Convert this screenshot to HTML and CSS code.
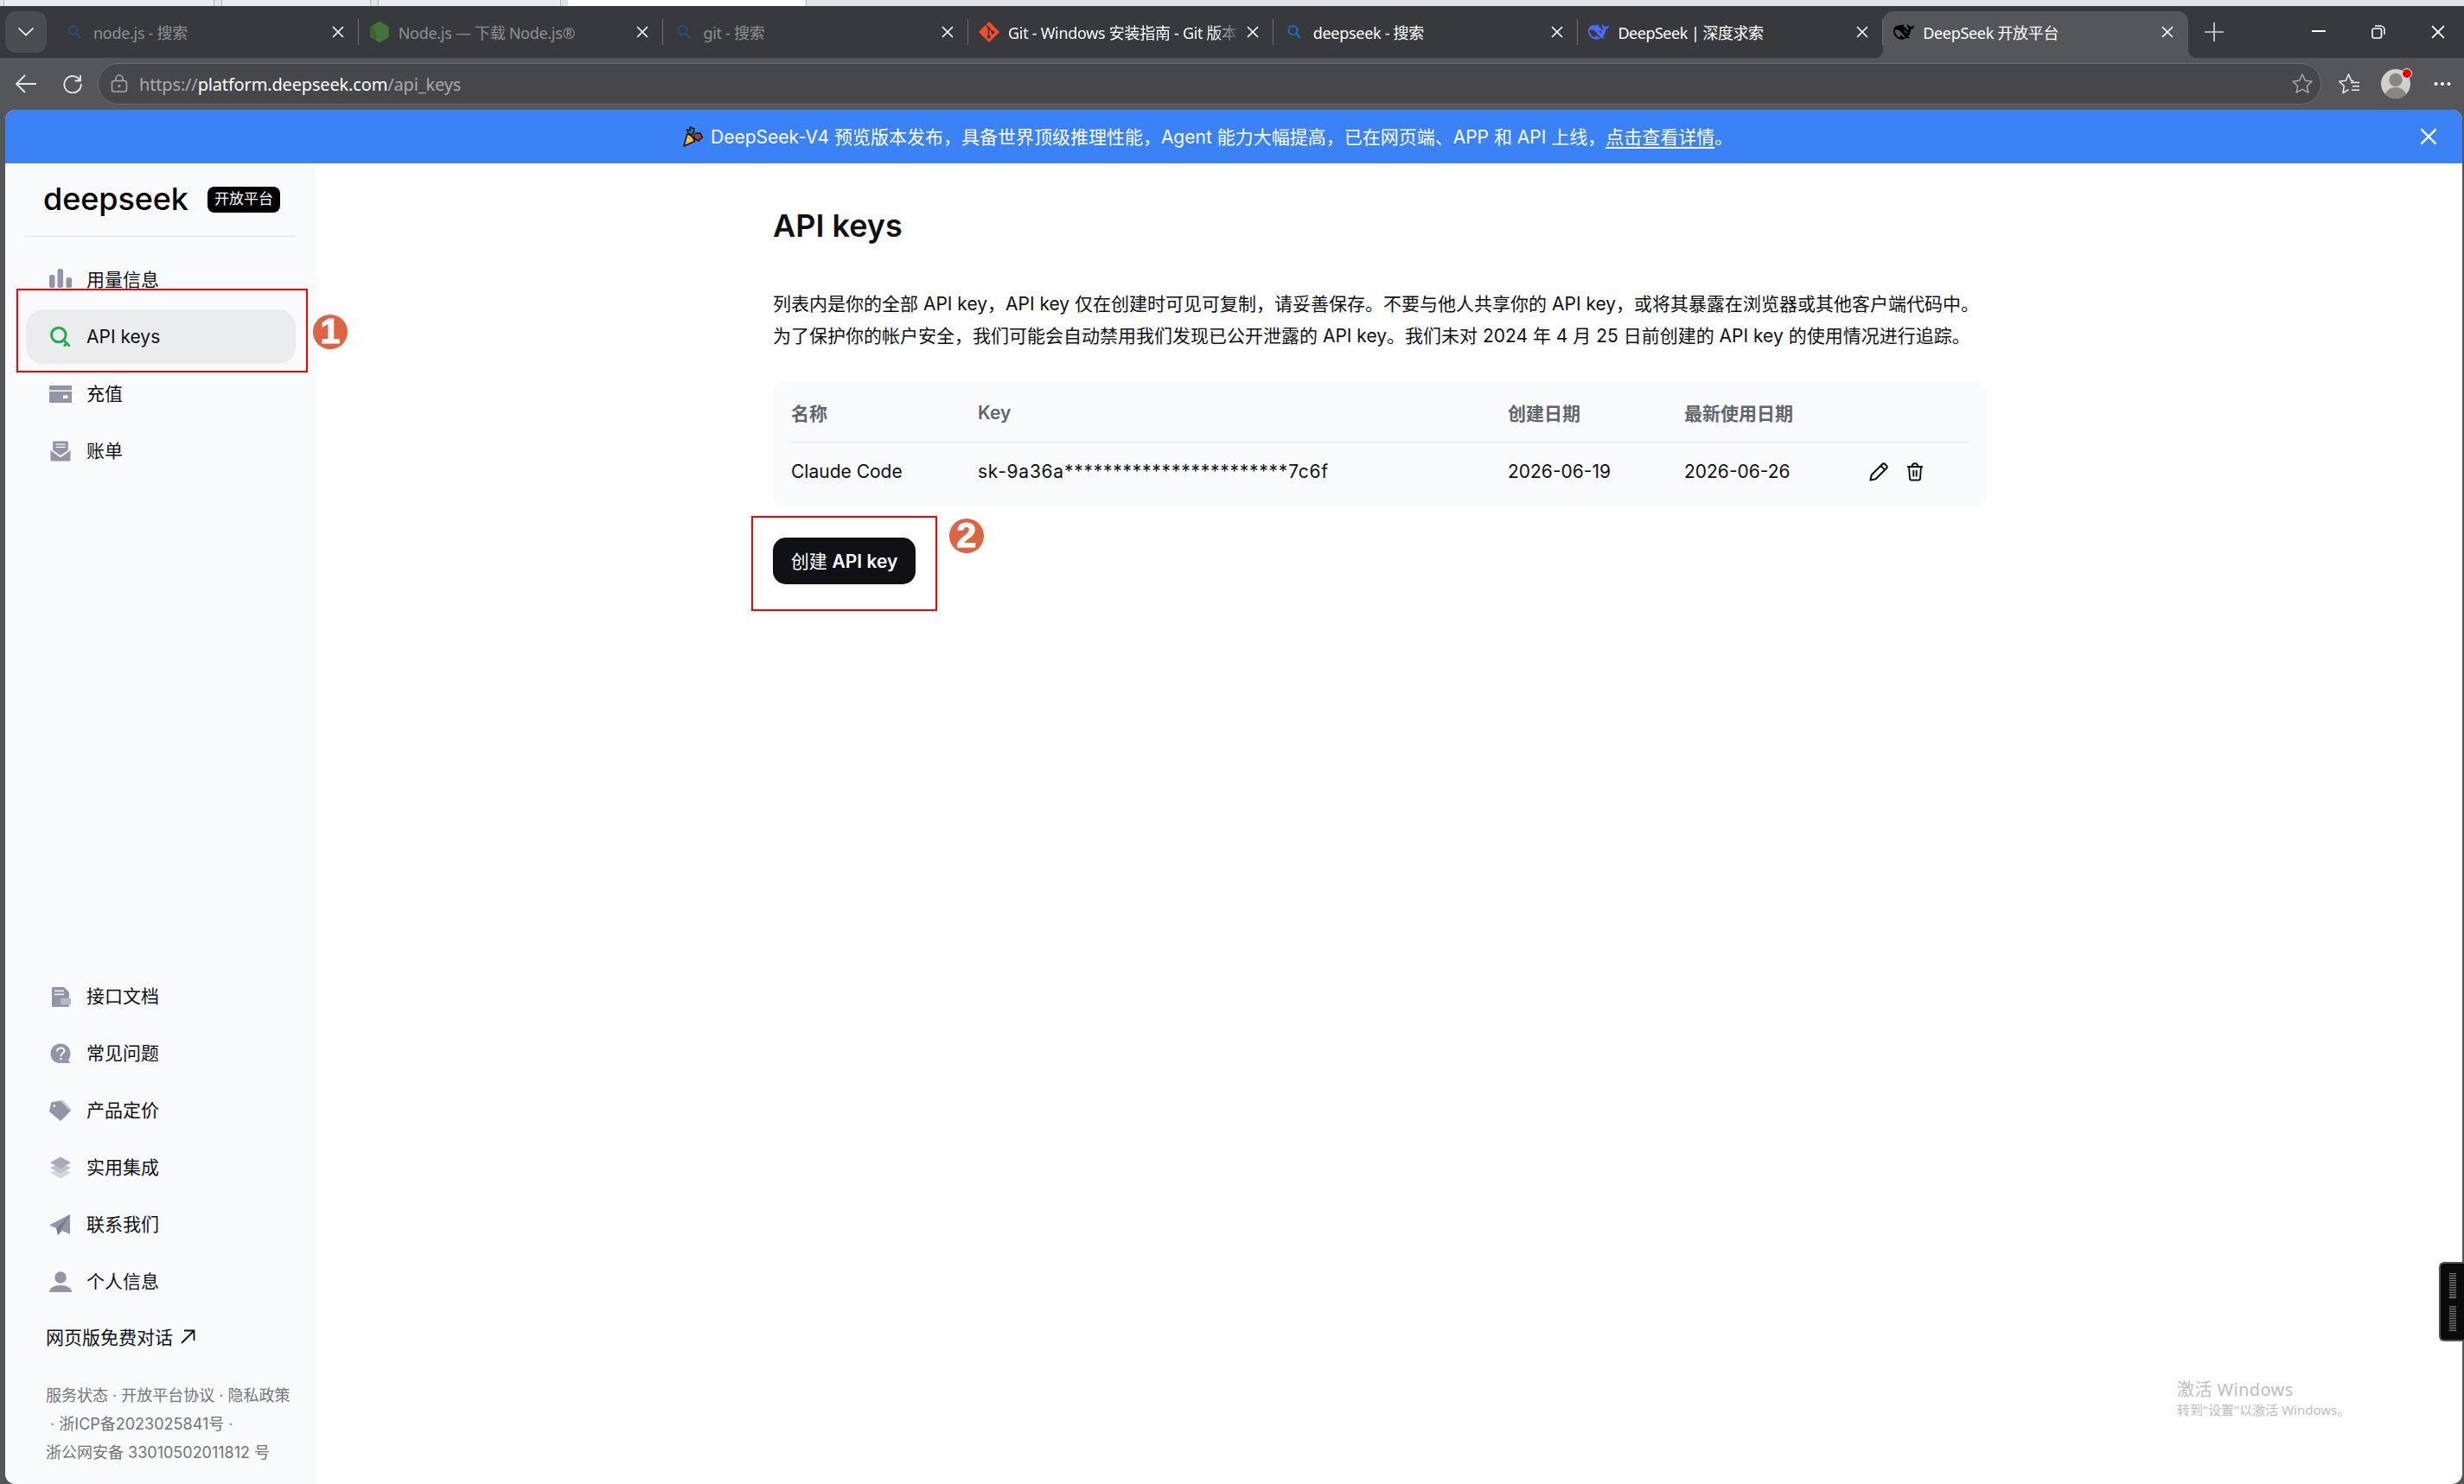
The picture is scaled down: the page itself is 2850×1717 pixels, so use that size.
FILE: index.html
```html
<!DOCTYPE html>
<html lang="zh-CN">
<head>
  <meta charset="UTF-8" />
  <title>DeepSeek 开放平台</title>
  <link rel="stylesheet" href="styles.css">
</head>
<body>
  <!-- Shared icons -->
  <svg class="defs">
    <symbol id="x" viewBox="0 0 14 14"><path d="M1 1l12 12M13 1L1 13" fill="none" stroke="currentColor" stroke-width="1.6"/></symbol>
    <symbol id="search" viewBox="0 0 16 16"><circle cx="6.5" cy="6" r="5" fill="none" stroke="currentColor" stroke-width="2"/><path d="M10 9.700l5 5" stroke="currentColor" stroke-width="2.200"/></symbol>
    <symbol id="whale" viewBox="0 0 24 24"><path fill="currentColor" d="M23.748 4.482c-.254-.124-.364.113-.512.234-.051.039-.094.09-.137.136-.372.397-.806.657-1.373.626-.829-.046-1.537.214-2.163.848-.133-.782-.575-1.248-1.247-1.548-.352-.156-.708-.311-.955-.65-.172-.241-.219-.51-.305-.774-.055-.16-.11-.323-.293-.35-.2-.031-.278.136-.356.276-.313.572-.434 1.202-.422 1.84.027 1.436.633 2.58 1.838 3.393.137.093.172.187.129.323-.082.28-.18.552-.266.833-.055.179-.137.217-.329.14a5.526 5.526 0 01-1.736-1.18c-.857-.828-1.631-1.742-2.597-2.458a11.365 11.365 0 00-.689-.471c-.985-.957.13-1.743.388-1.836.27-.098.093-.432-.779-.428-.872.004-1.67.295-2.687.684a3.055 3.055 0 01-.465.137 9.597 9.597 0 00-2.883-.102c-1.885.21-3.39 1.102-4.497 2.623C.082 8.606-.231 10.684.152 12.85c.403 2.284 1.569 4.175 3.36 5.653 1.858 1.533 3.997 2.284 6.438 2.14 1.482-.085 3.133-.284 4.994-1.86.47.234.962.327 1.78.397.63.059 1.236-.03 1.705-.128.735-.156.684-.837.419-.961-2.155-1.004-1.682-.595-2.113-.926 1.096-1.296 2.746-2.642 3.392-7.003.05-.347.007-.565 0-.845-.004-.17.035-.237.23-.256a4.173 4.173 0 001.545-.475c1.396-.763 1.96-2.015 2.093-3.517.02-.23-.004-.467-.247-.588zM11.581 18c-2.089-1.642-3.102-2.183-3.52-2.16-.392.024-.321.471-.235.763.09.288.207.486.371.739.114.167.192.416-.113.603-.673.416-1.842-.14-1.897-.167-1.361-.802-2.5-1.86-3.301-3.307-.774-1.393-1.224-2.887-1.298-4.482-.02-.386.093-.522.477-.592a4.696 4.696 0 011.529-.039c2.132.312 3.946 1.265 5.468 2.774.868.86 1.525 1.887 2.202 2.891.72 1.066 1.494 2.082 2.48 2.914.348.292.625.514.891.677-.802.09-2.14.11-3.054-.614zm1-6.44a.306.306 0 01.415-.287.302.302 0 01.2.288.306.306 0 01-.31.307.303.303 0 01-.304-.308zm3.11 1.596c-.2.081-.399.151-.59.16a1.245 1.245 0 01-.798-.254c-.274-.23-.47-.358-.552-.758a1.73 1.73 0 01.016-.588c.07-.327-.008-.537-.239-.727-.187-.156-.426-.199-.688-.199a.559.559 0 01-.254-.078c-.11-.054-.2-.19-.114-.358.028-.054.16-.186.192-.21.356-.202.767-.136 1.146.016.352.144.618.408 1.001.782.391.451.462.576.685.914.176.265.336.537.445.848.067.195-.019.354-.25.452z"/></symbol>
  </svg>

  <!-- Window behind the browser -->
  <div class="behind">
    <span class="cell c1"></span><span class="cell c2"></span><span class="cell c3"></span><span class="cell c4"></span>
  </div>

  <!-- Tab strip -->
  <div class="tabstrip">
    <div class="tab-menu"><svg width="20" height="12" viewBox="0 0 20 12"><path d="M1.500 1.500L10 9.500l8.500-8" fill="none" stroke="#fff" stroke-width="1.700"/></svg></div>
    <div class="tabs">
      <div class="tab sleep"><span class="fav"><svg class="search" width="16" height="16"><use href="#search"/></svg></span><span class="title">node.js - 搜索</span><svg class="close" width="14" height="14"><use href="#x"/></svg></div>
      <div class="tab sleep"><span class="fav"><svg width="22" height="24" viewBox="0 0 22 24"><path d="M11 0l10.500 6v12L11 24 .5 18V6z" fill="#4a7a3f"/><path d="M11 0l10.500 6L6 21 .5 18V6z" fill="#37662f"/><path d="M3 5L11 0l10.500 6v12L11 24z" fill="#437439"/></svg></span><span class="title">Node.js — 下载 Node.js®</span><svg class="close" width="14" height="14"><use href="#x"/></svg></div>
      <div class="tab sleep"><span class="fav"><svg class="search" width="16" height="16"><use href="#search"/></svg></span><span class="title">git - 搜索</span><svg class="close" width="14" height="14"><use href="#x"/></svg></div>
      <div class="tab"><span class="fav"><svg width="24" height="24" viewBox="0 0 24 24"><path d="M12 0l12 12-12 12L0 12z" fill="#f34f29"/><path d="M8.500 4l3 3.500v10M12 8l4.500 4.500" fill="none" stroke="#38393c" stroke-width="1.500"/><circle cx="11.700" cy="8" r="1.800" fill="#38393c"/><circle cx="11.700" cy="17.500" r="1.900" fill="#38393c"/><circle cx="16.500" cy="12.500" r="1.900" fill="#38393c"/></svg></span><span class="title fade">Git - Windows 安装指南 - Git 版本</span><svg class="close" width="14" height="14"><use href="#x"/></svg></div>
      <div class="tab"><span class="fav"><svg class="search" width="16" height="16"><use href="#search"/></svg></span><span class="title">deepseek - 搜索</span><svg class="close" width="14" height="14"><use href="#x"/></svg></div>
      <div class="tab"><span class="fav"><svg class="blue" width="24" height="24"><use href="#whale"/></svg></span><span class="title tight">DeepSeek | 深度求索</span><svg class="close" width="14" height="14"><use href="#x"/></svg></div>
      <div class="tab active"><span class="fav"><svg class="black" width="24" height="24"><use href="#whale"/></svg></span><span class="title">DeepSeek 开放平台</span><svg class="close" width="14" height="14"><use href="#x"/></svg></div>
    </div>
    <svg class="plus" width="22" height="22" viewBox="0 0 22 22"><path d="M11 0v22M0 11h22" stroke="#d5d5d6" stroke-width="1.700"/></svg>
    <div class="window-buttons">
      <svg width="16" height="16" viewBox="0 0 16 16"><path d="M0 7h16" stroke="#fff" stroke-width="2"/></svg>
      <svg width="16" height="16" viewBox="0 0 16 16"><rect x="1" y="4" width="10.500" height="11" rx="2" fill="none" stroke="#fff" stroke-width="1.600"/><path d="M4 1h6.500a4.500 4.500 0 0 1 4.500 4.500V11" fill="none" stroke="#fff" stroke-width="1.500"/></svg>
      <svg width="16" height="16"><use href="#x"/></svg>
    </div>
  </div>

  <!-- Address bar -->
  <div class="toolbar">
    <svg class="back" width="26" height="22" viewBox="0 0 26 22"><path d="M12 1L2 11l10 10M2 11h23" fill="none" stroke="#e8e8e8" stroke-width="1.800"/></svg>
    <svg class="reload" width="22" height="22" viewBox="0 0 22 22"><path d="M19.500 7A9.700 9.700 0 1 0 20.700 11M20 1v6.500h-6.500" fill="none" stroke="#e8e8e8" stroke-width="1.800"/></svg>
    <div class="address">
      <svg width="20" height="22" viewBox="0 0 20 22"><rect x="1.500" y="7.500" width="17" height="12.500" rx="2.500" fill="none" stroke="#a9aaac" stroke-width="1.500"/><path d="M6 7.500V5a4 4 0 0 1 8 0v2.500" fill="none" stroke="#a9aaac" stroke-width="1.500"/><circle cx="10" cy="13.500" r="1.500" fill="#a9aaac"/></svg>
      <span class="url">https://<b>platform.deepseek.com</b>/api_keys</span>
      <svg class="star" width="26" height="26" viewBox="0 0 26 26"><path d="M13 2l3.300 7.200 7.700 1-5.700 5.300 1.500 7.700L13 19.400l-6.800 3.800 1.500-7.700L2 10.200l7.700-1z" fill="none" stroke="#a9aaac" stroke-width="1.500" stroke-linejoin="round"/></svg>
    </div>
    <svg class="favs" width="26" height="26" viewBox="0 0 26 26"><path d="M18.500 9.700l-3-.5L12.500 2 9.300 9.200l-7.600 1 5.600 5.300-1.300 8 6.500-3.800" fill="none" stroke="#f0f0f0" stroke-width="1.500" stroke-linejoin="round"/><path d="M15 11.500h10M17 15.800h8M16 20.200h9" stroke="#f0f0f0" stroke-width="1.500"/></svg>
    <div class="avatar">
      <svg width="34" height="34" viewBox="0 0 34 34"><clipPath id="round"><circle cx="17" cy="17" r="17"/></clipPath><g clip-path="url(#round)"><path d="M0 0h34v34H0z" fill="#d2d0ce"/><circle cx="17" cy="12.500" r="7.700" fill="#8a8683"/><ellipse cx="17" cy="32" rx="12.500" ry="11" fill="#8a8683"/></g></svg>
      <i class="dot"></i>
    </div>
    <svg class="more" width="20" height="6" viewBox="0 0 20 6"><circle cx="2.500" cy="3" r="2" fill="#fff"/><circle cx="10" cy="3" r="2" fill="#fff"/><circle cx="17.500" cy="3" r="2" fill="#fff"/></svg>
  </div>

  <div class="page">
    <div class="banner">
      <svg class="popper" width="24" height="24" viewBox="0 0 24 24"><path d="M6 9c4 1 7 4 8.500 8.500L2 23z" fill="#ffc83d" stroke="#111" stroke-width="1.600" stroke-linejoin="round"/><path d="M7 8L5.500 4 9 5V1l5 2-1 6-3 1z" fill="#127f8c" stroke="#111" stroke-width="1.400" stroke-linejoin="round"/><path d="M13 12l2-3.500L21 8l2.500 5-3 2-1 2-4.500-2z" fill="#a5402a" stroke="#111" stroke-width="1.400" stroke-linejoin="round"/><path d="M12 12l4-5" stroke="#5b2e91" stroke-width="2"/><path d="M8 13l1 2M6 18l1 1M11 16l1 1" stroke="#e07a3a" stroke-width="1.500"/></svg>
      <span class="banner-text">DeepSeek-V4 预览版本发布，具备世界顶级推理性能，Agent 能力大幅提高，已在网页端、APP 和 API 上线，<u>点击查看详情</u>。</span>
      <svg class="banner-close" width="20" height="20"><use href="#x"/></svg>
    </div>

    <div class="layout">
      <aside class="sidebar">
        <div class="brand"><span class="logo">deepseek</span><span class="tag">开放平台</span></div>

        <nav class="nav">
          <a><svg width="26" height="26" viewBox="0 0 26 26"><rect x="0" y="7" width="6.500" height="15" rx="2.500"/><rect x="9.500" y="0" width="6.500" height="22" rx="2.500"/><rect x="19.500" y="10" width="6.500" height="12" rx="2.500"/><path d="M0 24h26v1.200H0z"/></svg><span>用量信息</span></a>
          <a class="current"><svg width="26" height="26" viewBox="0 0 26 26"><circle cx="10.800" cy="10.500" r="8.300" fill="none" stroke="#22ac4e" stroke-width="3"/><path d="M16.500 16.500l7 7M20.500 20l-3.500 3.500" fill="none" stroke="#22ac4e" stroke-width="3"/></svg><span>API keys</span></a>
          <a><svg width="26" height="26" viewBox="0 0 26 26"><rect x="0" y="3" width="26" height="5.500" rx="1"/><path fill-rule="evenodd" d="M0 10h26v12a1 1 0 0 1-1 1H1a1 1 0 0 1-1-1zM16 14.500v3.500h5.500v-3.500z"/></svg><span>充值</span></a>
          <a><svg width="26" height="26" viewBox="0 0 26 26"><path fill-rule="evenodd" d="M5 1.500h16a.8.8 0 0 1 .8.800V12L13 18 4.200 12V2.300a.8.800 0 0 1 .8-.8zM7.500 4.500v1.300h11V4.500zM7.500 7.800v1.300h11V7.800z"/><path d="M1.500 12L13 20.500 24.500 12v11.500a1 1 0 0 1-1 1h-21a1 1 0 0 1-1-1z"/></svg><span>账单</span></a>
        </nav>

        <nav class="nav bottom">
          <a><svg width="26" height="26" viewBox="0 0 26 26"><path d="M3 3a1 1 0 0 1 1-1h13l6 6v16a1 1 0 0 1-1 1H4a1 1 0 0 1-1-1z"/><path d="M6 6.500h11M6 10.500h11" stroke="#f9fafc" stroke-width="1.300"/><rect x="13" y="15" width="12" height="7.500" rx="1" fill="#b4b7c5"/></svg><span>接口文档</span></a>
          <a><svg width="26" height="26" viewBox="0 0 26 26"><path d="M13 1.500c6.500 0 11.500 5 11.500 11.500 0 3.500-1 5.500-2.500 7.500l2 3.500h-10C6.500 24.700 1.500 19.500 1.500 13S6.500 1.500 13 1.500z"/><path d="M9 10.500c0-5.500 8.500-5.200 8.500-.8 0 3-4.200 3.200-4.200 6.500M13.300 18v2.500" fill="none" stroke="#f9fafc" stroke-width="2"/></svg><span>常见问题</span></a>
          <a><svg width="26" height="26" viewBox="0 0 26 26"><path d="M9 1.500l7-.5 10 11L14 24z" fill="#c9cbd6"/><path fill-rule="evenodd" d="M2.500 3L13 2l11.500 11.500L13 25 0 14zM5.800 6a1.400 1.400 0 1 0 .1 2.800A1.400 1.400 0 0 0 5.800 6z"/></svg><span>产品定价</span></a>
          <a><svg width="26" height="26" viewBox="0 0 26 26"><path d="M1 19l12-6 12 6-12 6.500z" fill="#d5d7df"/><path d="M1 13.200l12-6 12 6-12 6.300z" fill="#bfc1cd"/><path d="M1 7.200L13 .5l12 6.700-12 6.500z" fill="#a7aab8"/></svg><span>实用集成</span></a>
          <a><svg width="26" height="26" viewBox="0 0 26 26"><path d="M24 1v23l-9-4-5 5-2-8-8-3.500z"/><path d="M23.500 2L8.500 17l1.500 8 3-6z" fill="#777a8b"/></svg><span>联系我们</span></a>
          <a><svg width="26" height="26" viewBox="0 0 26 26"><circle cx="13" cy="8" r="6.700"/><path d="M0 25c0-5 6-8 13-8s13 3 13 8z"/></svg><span>个人信息</span></a>
        </nav>

        <div class="web-chat">网页版免费对话<svg width="17" height="17" viewBox="0 0 17 17"><path d="M1 16L15.500 1.500M4 1.500h11.500V13" fill="none" stroke="#0f1115" stroke-width="1.800"/></svg></div>
        <div class="legal">服务状态 · 开放平台协议 · 隐私政策<br>&nbsp;· 浙ICP备2023025841号 ·<br>浙公网安备 33010502011812 号</div>
      </aside>

      <main class="content">
        <h1>API keys</h1>
        <p class="intro">列表内是你的全部 API key，API key 仅在创建时可见可复制，请妥善保存。不要与他人共享你的 API key，或将其暴露在浏览器或其他客户端代码中。<br>为了保护你的帐户安全，我们可能会自动禁用我们发现已公开泄露的 API key。我们未对 2024 年 4 月 25 日前创建的 API key 的使用情况进行追踪。</p>
        <div class="card">
          <div class="row head"><span>名称</span><span class="latin">Key</span><span>创建日期</span><span>最新使用日期</span><span></span></div>
          <div class="row">
            <span>Claude Code</span><span class="key">sk-9a36a***********************7c6f</span><span>2026-06-19</span><span>2026-06-26</span>
            <span class="actions">
              <svg width="22" height="22" viewBox="0 0 22 22"><path d="M1.500 20.500l1.200-6L15 2.200a2.500 2.500 0 0 1 3.500 0l1.300 1.300a2.500 2.500 0 0 1 0 3.500L7.500 19.300zM13.500 4L18 8.500" fill="none" stroke="#0f1115" stroke-width="2" stroke-linejoin="round"/></svg>
              <svg width="20" height="22" viewBox="0 0 20 22"><path d="M1 5h18M6.500 5c0-5 7-5 7 0M3 5l1 13.500a2 2 0 0 0 2 2h8a2 2 0 0 0 2-2L17 5M8.300 9v7.500M11.700 9v7.500" fill="none" stroke="#0f1115" stroke-width="1.900"/></svg>
            </span>
          </div>
        </div>
        <button class="create">创建 <b>API key</b></button>
      </main>
    </div>
  </div>

  <!-- Annotations and desktop overlays -->
  <div class="mark mark1"></div>
  <div class="mark mark2"></div>
  <div class="num num1">1</div>
  <div class="num num2">2</div>
  <div class="watermark"><div class="big">激活 Windows</div><div class="small">转到"设置"以激活 Windows。</div></div>
  <div class="meter"><i class="bar orange"></i><i class="bar green"></i></div>
</body>
</html>
```
FILE: styles.css
```css
* {
  box-sizing: border-box;
}

html, body {
  margin: 0;
  padding: 0;
  height: 1717px;
  overflow: hidden;
}

body {
  display: flex;
  flex-direction: column;
  background: #55565a;
  color: #0f1115;
  font-family: Inter, "Noto Sans CJK SC", sans-serif;
  font-size: 21px;
}

svg {
  flex: none;
  display: block;
}

.defs {
  position: absolute;
  width: 0;
  height: 0;
}

/* Sliver of the window behind */
.behind {
  display: flex;
  flex: none;
  height: 7px;
  padding-left: 4px;
  background: #e3e4e6;
}
.cell {
  background: #ebecee;
  border: solid #b5b6b8;
  border-width: 0 1px;
}
.c1 { width: 244px; }
.c2 { width: 173px; margin-left: 8px; }
.c3 { width: 212px; margin-left: 8px; }
.c4 { width: 276px; margin-left: 8px; background: #fff; border-left: none; }

/* Tabs */
.tabstrip {
  display: flex;
  flex: none;
  align-items: flex-start;
  height: 60px;
  background: #38393c;
  color: #fff;
  font-family: "Noto Sans", "Noto Sans CJK SC", sans-serif;
  font-size: 18px;
}
.tab-menu {
  display: flex;
  align-items: center;
  justify-content: center;
  width: 48px;
  height: 48px;
  margin: 6px 8px 0 6px;
  border-radius: 12px;
  background: #4b4c50;
}
.tabs {
  display: flex;
}
.tab {
  display: flex;
  align-items: center;
  width: 352.7px;
  height: 54px;
  margin-top: 6px;
  padding: 0 17px 6px 12px;
  background: linear-gradient(#6a6b6e, #6a6b6e) right 0 top 9px / 1px 30px no-repeat;
}
.fav {
  display: flex;
  flex: none;
  justify-content: center;
  width: 24px;
}
.title {
  flex: 1;
  width: 0;
  margin-left: 10px;
  margin-right: 7px;
  overflow: hidden;
  white-space: nowrap;
  line-height: 30px;
  letter-spacing: -0.3px;
  padding-top: 2px;
}
.tight {
  letter-spacing: -0.5px;
}
.fade {
  mask-image: linear-gradient(to right, #000 88%, transparent);
}
.sleep .title { color: #8f9092; }
.search { color: #1472c4; }
.sleep .search { color: #24517a; }
.blue { color: #4d6bfe; }
.black { color: #000; }
.active {
  position: relative;
  border-radius: 12px 12px 0 0;
  background: #55565a;
}
.active::before, .active::after {
  content: "";
  position: absolute;
  bottom: 0;
  width: 10px;
  height: 10px;
}
.active::before {
  left: -10px;
  background: radial-gradient(circle at 0 0, transparent 10px, #55565a 10.5px);
}
.active::after {
  right: -10px;
  background: radial-gradient(circle at 100% 0, transparent 10px, #55565a 10.5px);
}
.plus {
  margin: 19px 0 0 19px;
}
.window-buttons {
  display: flex;
  gap: 53px;
  margin: 22px 22px 0 auto;
}

/* Toolbar */
.toolbar {
  display: flex;
  flex: none;
  align-items: center;
  height: 60px;
  padding-left: 17px;
}
.reload { margin-left: 30px; }
.address {
  display: flex;
  align-items: center;
  width: 2572px;
  height: 48px;
  margin-left: 18px;
  padding: 0 8px 0 14px;
  border: 1px solid #6a6b6f;
  border-radius: 24px;
  background: #46474a;
}
.url {
  margin-left: 13px;
  color: #a9aaac;
  font-family: "Noto Sans", sans-serif;
  font-size: 20px;
  letter-spacing: -0.16px;
}
.url b {
  color: #fff;
  font-weight: 400;
}
.star { margin-left: auto; }
.favs { margin-left: 19px; }
.avatar {
  position: relative;
  margin-left: 24px;
}
.dot {
  position: absolute;
  top: -1px;
  right: -2px;
  width: 12px;
  height: 12px;
  border: 1px solid #fff;
  border-radius: 50%;
  background: #e30000;
}
.more { margin-left: 27px; }

/* Page */
.page {
  display: flex;
  flex-direction: column;
  flex: 1;
  margin: 0 2px 0 6px;
  border-radius: 12px;
  background: #fff;
  overflow: hidden;
}
.banner {
  display: flex;
  flex: none;
  align-items: center;
  height: 62px;
  padding: 0 29px 0 783px;
  background: #3b82f6;
  color: #fff;
}
.banner-text {
  margin-left: 9px;
  padding-bottom: 3px;
  white-space: nowrap;
}
.banner u {
  text-underline-offset: 4px;
}
.banner-close { margin-left: auto; }

.layout {
  display: flex;
  flex: 1;
}
.sidebar {
  display: flex;
  flex-direction: column;
  width: 360px;
  padding: 0 24px;
  background: #f9fafc;
}
.brand {
  display: flex;
  align-items: center;
  height: 85px;
  padding: 0 0 2px 20px;
  border-bottom: 1px solid #dfe1e4;
}
.logo {
  width: 190px;
  font-size: 36px;
  font-weight: 500;
  line-height: 40px;
  letter-spacing: -0.1px;
  color: #000;
}
.tag {
  width: 84px;
  height: 30px;
  margin-top: 1px;
  border-radius: 8px;
  background: #000;
  color: #fff;
  font-size: 17px;
  line-height: 29px;
  text-align: center;
}
.nav {
  display: flex;
  flex-direction: column;
  gap: 3px;
  padding-top: 18px;
}
.nav a {
  display: flex;
  align-items: center;
  gap: 17px;
  height: 63px;
  padding-left: 27px;
  border-radius: 20px;
}
.nav a:not(.current) span {
  padding-bottom: 4px;
}
.nav svg {
  fill: #9295a5;
}
.nav .current {
  background: #ebecee;
}
.nav.bottom {
  margin-top: auto;
  padding: 0;
}
.web-chat {
  display: flex;
  align-items: center;
  gap: 9px;
  height: 66px;
  padding: 0 0 2px 23px;
}
.legal {
  padding: 18px 0 20px 23px;
  color: #72757a;
  font-size: 18px;
  line-height: 33px;
  white-space: nowrap;
}

.content {
  width: 1404px;
  margin-left: 528px;
}
h1 {
  margin: 50px 0 0;
  font-size: 36px;
  font-weight: 600;
  line-height: 44px;
}
.intro {
  margin: 50px 0 0;
  line-height: 37px;
  white-space: nowrap;
}
.card {
  height: 145px;
  margin-top: 34px;
  padding: 0 21px;
  border-radius: 16px;
  background: #f9fafc;
}
.row {
  display: grid;
  grid-template-columns: 216px 613px 204px 214px 1fr;
  align-items: center;
  height: 67px;
}
.head {
  height: 71px;
  padding-top: 1px;
  border-bottom: 1px solid #e1e4e7;
  color: #61666b;
  font-weight: 600;
}
.head .latin {
  padding-top: 2px;
}
.key {
  letter-spacing: 0.75px;
}
.actions {
  display: flex;
  gap: 21px;
}
.create {
  display: block;
  width: 165px;
  height: 54px;
  margin-top: 36px;
  padding: 0 0 3px;
  border: none;
  border-radius: 15px;
  background: #0f1115;
  color: #fff;
  font: inherit;
  white-space: nowrap;
}
.create b { font-weight: 600; }

/* Annotations */
.mark {
  position: absolute;
  border: 2px solid #f00;
}
.mark1 { left: 19px; top: 334px; width: 337px; height: 97px; }
.mark2 { left: 869px; top: 597px; width: 215px; height: 110px; }
.num {
  position: absolute;
  width: 40px;
  height: 40px;
  border-radius: 50%;
  background: #dc6443;
  color: #fff;
  font: bold 41px/39px "Liberation Sans", sans-serif;
  -webkit-text-stroke: 1px #fff;
  text-align: center;
}
.num1 { left: 362px; top: 364px; }
.num2 { left: 1098px; top: 600px; }

.watermark {
  position: absolute;
  left: 2518px;
  top: 1594px;
  color: #bdbdbd;
  font-family: "Noto Sans", "Noto Sans CJK SC", sans-serif;
  white-space: nowrap;
}
.big { font-size: 20px; line-height: 27px; letter-spacing: 0.4px; }
.small { font-size: 15px; line-height: 21px; }

.meter {
  position: absolute;
  left: 2821px;
  top: 1460px;
  display: flex;
  flex-direction: column;
  gap: 9px;
  width: 29px;
  height: 92px;
  padding: 11px 0 0 10px;
  border: 2px solid #55565a;
  border-right: none;
  border-radius: 6px 0 0 6px;
  background: #0a0a0a;
}
.bar {
  width: 8px;
  height: 29px;
}
.orange { background: linear-gradient(#d98e04, #d98e04) bottom / 8px 1px no-repeat, repeating-linear-gradient(#77777a 0 1px, #0a0a0a 1px 2px); }
.green { background: linear-gradient(#6a9c2a, #6a9c2a) bottom / 8px 1px no-repeat, repeating-linear-gradient(#77777a 0 1px, #0a0a0a 1px 2px); }
```
